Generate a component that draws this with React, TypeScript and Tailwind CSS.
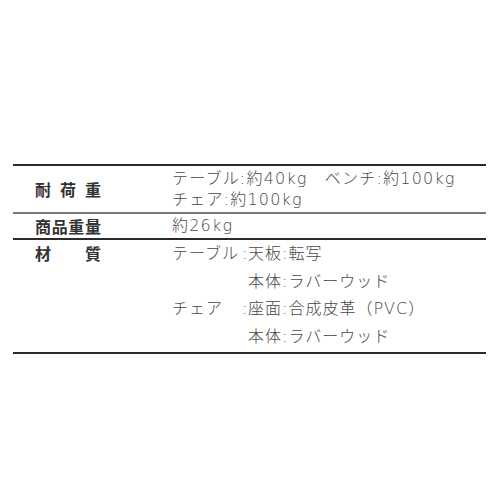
const FONT = "font-['DejaVu_Sans','Noto_Sans_CJK_JP',sans-serif]";

function Label({ chars }: { chars: string[] }) {
  return (
    <div className="flex w-[66px] justify-between font-['Noto_Sans_CJK_JP',sans-serif] text-[16px] font-bold text-[#333]">
      {chars.map((c, i) => (
        <span key={i}>{c}</span>
      ))}
    </div>
  );
}

const MATERIALS = [
  { name: 'テーブル', colon: true, part: '天板', value: '転写' },
  { name: '', colon: false, part: '本体', value: 'ラバーウッド' },
  { name: 'チェア', colon: true, part: '座面', value: '合成皮革（PVC）' },
  { name: '', colon: false, part: '本体', value: 'ラバーウッド' },
];

export default function App() {
  return (
    <div className={`h-[501px] w-[500px] bg-white px-[13px] pt-[164px] ${FONT}`}>
      <div className="w-[473px] border-y-2 border-[#2a2a2a]">
        {/* 耐荷重 */}
        <div className="flex items-center py-[2px] leading-[21px]">
          <div className="w-[159px] pl-[22px]">
            <Label chars={['耐', '荷', '重']} />
          </div>
          <div className="text-[16px] font-light tracking-[1.2px] text-[#484848]">
            <p>テーブル:約40kg　ベンチ:約100kg</p>
            <p>チェア:約100kg</p>
          </div>
        </div>

        {/* 商品重量 */}
        <div className="flex h-[26px] items-center border-t-2 border-[#777] leading-[24px]">
          <div className="w-[159px] pl-[22px]">
            <Label chars={['商', '品', '重', '量']} />
          </div>
          <p className="text-[16px] font-light tracking-[1.2px] text-[#484848]">約26kg</p>
        </div>

        {/* 材質 */}
        <div className="flex border-t-2 border-[#2a2a2a] pb-[2px] leading-[27.5px]">
          <div className="w-[159px] pl-[22px]">
            <Label chars={['材', '質']} />
          </div>
          <div className="grid grid-cols-[70px_6px_auto] text-[16px] font-light tracking-[1px] text-[#484848]">
            {MATERIALS.map((m, i) => (
              <div key={i} className="contents">
                <span>{m.name}</span>
                <span>{m.colon ? ':' : ''}</span>
                <span>
                  {m.part}:{m.value}
                </span>
              </div>
            ))}
          </div>
        </div>
      </div>
    </div>
  );
}
